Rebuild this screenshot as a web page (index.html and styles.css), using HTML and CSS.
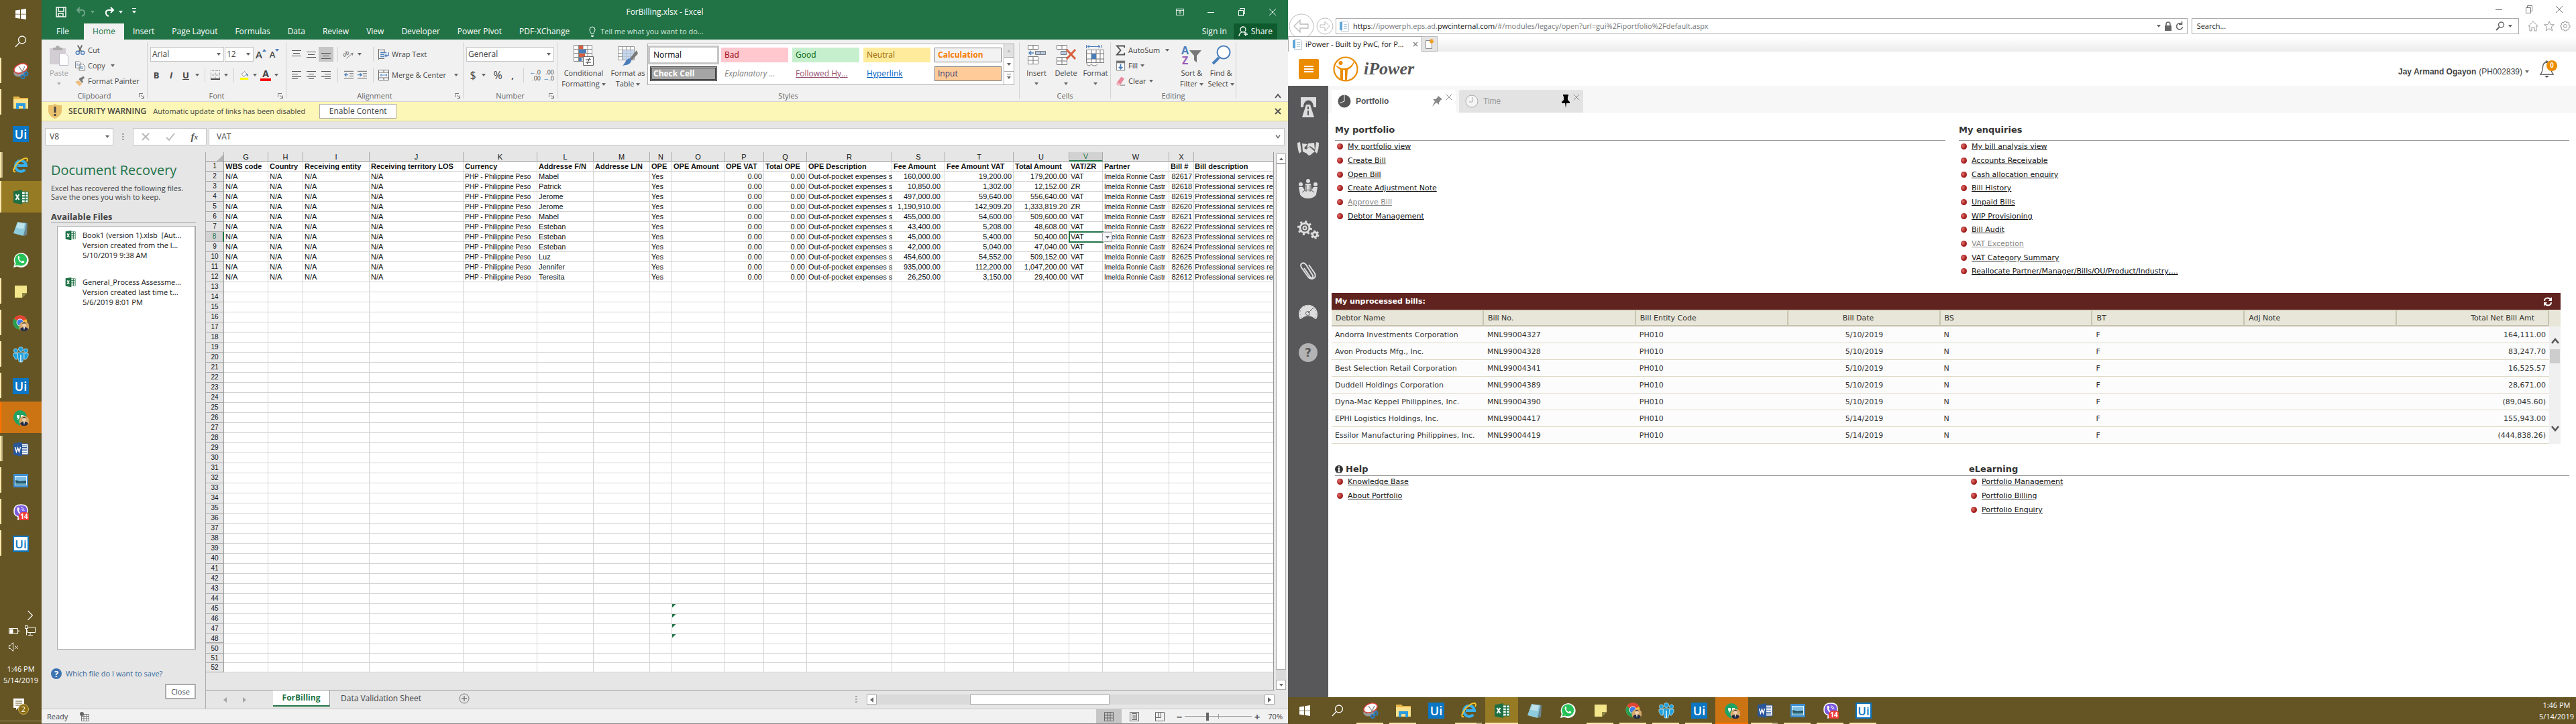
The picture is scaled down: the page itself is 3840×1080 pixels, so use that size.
FILE: index.html
```html
<!DOCTYPE html>
<html lang="en">
<head>
<meta charset="utf-8">
<title>ForBilling.xlsx - Excel</title>
<link rel="stylesheet" href="styles.css">
</head>
<body>
<svg class="defs" aria-hidden="true">
  <symbol id="i-win" viewBox="0 0 24 24"><path fill="#fff" d="M4 6.500l7-1v6.200H4zM12 5.300l8-1.300v7.700h-8zM4 12.600h7v6.200l-7-1zM12 12.600h8V20l-8-1.200z"/></symbol>
  <symbol id="i-search" viewBox="0 0 24 24"><g fill="none" stroke="#fff" stroke-width="1.300"><circle cx="14" cy="9.500" r="5.500"/><path d="M10 13.500L4 20"/></g></symbol>
  <symbol id="i-snip" viewBox="0 0 24 24"><ellipse cx="11" cy="13" rx="10" ry="7" fill="#9a9a9a" transform="rotate(-22 11 13)"/><ellipse cx="12" cy="8" rx="10.500" ry="6.500" fill="#fff" stroke="#d23a35" stroke-width="1.500" transform="rotate(-22 12 8)"/><path d="M9 5l7 10M18 5l-5 10" stroke="#888" stroke-width="1.300"/><g fill="none" stroke="#2c7dc0" stroke-width="2"><circle cx="20" cy="16" r="2.500"/><circle cx="15" cy="20.500" r="2.500"/></g></symbol>
  <symbol id="i-folder" viewBox="0 0 24 24"><path fill="#e9b84a" d="M1 3h8l2 2h12v4H1z"/><path fill="#fce28c" d="M1 7h22v14H1z"/><path fill="#2e9ce0" d="M5 13h14v9h-4v-5H9v5H5z"/></symbol>
  <symbol id="i-ui" viewBox="0 0 24 24"><path fill="#0a76c4" d="M0 0h24v24H0z"/><text x="12" y="18.500" text-anchor="middle" font-family="Open Sans,sans-serif" font-size="18" font-weight="600" fill="#fff">Ui</text></symbol>
  <symbol id="i-uiw" viewBox="0 0 24 24"><path fill="#fff" stroke="#0a76c4" stroke-width="2" d="M1 1h22v22H1z"/><text x="12" y="18.500" text-anchor="middle" font-family="Open Sans,sans-serif" font-size="17" font-weight="600" fill="#0a76c4">Ui</text></symbol>
  <symbol id="i-ie" viewBox="0 0 24 24"><path d="M18 18a8 8 0 1 1 2-6H7" fill="none" stroke="#38b0ee" stroke-width="4"/><path d="M4 21C-2 23 3 11 11 5s13-5 10 1" fill="none" stroke="#f7c52d" stroke-width="2"/></symbol>
  <symbol id="i-excel" viewBox="0 0 24 24"><path fill="#fff" stroke="#217346" d="M12 4h11v16H12z"/><path stroke="#217346" stroke-width="1.500" d="M13 8h9M13 12h9M13 16h9M18.500 4v16" fill="none"/><path fill="#1d7044" d="M1 3.500L14 1v22L1 20.500z"/><path d="M4.500 8l5 8M9.500 8l-5 8" stroke="#fff" stroke-width="2"/></symbol>
  <symbol id="i-word" viewBox="0 0 24 24"><path fill="#fff" stroke="#2b579a" d="M12 4h11v16H12z"/><path stroke="#2b579a" d="M14 7h7M14 9.500h7M14 12h7M14 14.500h7M14 17h7"/><path fill="#2b579a" d="M1 3.500L14 1v22L1 20.500z"/><path d="M3.500 9l2 7 2-6 2 6 2-7" stroke="#fff" stroke-width="1.500" fill="none"/></symbol>
  <symbol id="i-note" viewBox="0 0 24 24"><path fill="#6b8792" d="M16 3l6 1-1 17-4 2z"/><path fill="#8ecbdc" d="M7 2l13 2-4 19-15-4z"/><path fill="#bde3ec" d="M8 3l10 1.500-2 8L5 11z"/></symbol>
  <symbol id="i-wa" viewBox="0 0 24 24"><path fill="#fff" d="M1 23l1.800-6A11 11 0 1 1 7 21.500z"/><path fill="#28c158" d="M3.500 20.500l1.200-4A9 9 0 1 1 8 19.500z"/><path fill="#fff" d="M8 6.500c1-1 2 0 2.300 1.700L9.400 10c1 2 2 3 4 4l1.500-1.300c2 .4 3 1.300 2.300 2.300C15 19 6 13 8 6.500z"/></symbol>
  <symbol id="i-sticky" viewBox="0 0 24 24"><path fill="#f3e68b" d="M3 3h18v11l-7 7H3z"/><path fill="#8f8648" d="M21 14l-7 7v-7z"/></symbol>
  <symbol id="i-chrome" viewBox="0 0 24 24"><circle cx="11" cy="11" r="10.500" fill="#fbc02d"/><path fill="#e04535" d="M11 11L2 5.500A10.500 10.500 0 0 1 20.500 6z"/><path fill="#2a9e52" d="M11 11L2 5.500A10.500 10.500 0 0 0 10 21.500z"/><circle cx="11" cy="11" r="5" fill="#3e7de8" stroke="#fff"/></symbol>
  <symbol id="i-hang" viewBox="0 0 24 24"><path fill="#1fa363" d="M11 1a10 10 0 0 1 0 20v3C4 21 1 16 1 11A10 10 0 0 1 11 1z"/><path fill="#fff" d="M6 8h4v4l-2 3H7l1-3H6zM12 8h4v4l-2 3h-1l1-3h-2z"/></symbol>
  <symbol id="i-face" viewBox="0 0 24 24"><circle cx="17" cy="17" r="7.500" fill="#d6a96a"/><circle cx="17" cy="14.500" r="3" fill="#f0cfae"/><path fill="#332620" d="M14 14c0-4 6-4 6 0l-1-1.500h-4z"/><path fill="#232b45" d="M11 21c1-4 11-4 12 0-3 5-9 5-12 0z"/><path fill="#fff" d="M16 18h2l-1 5z"/></symbol>
  <symbol id="i-people" viewBox="0 0 24 24"><g fill="#1ea0dc" stroke="#c9edfb" stroke-width=".7"><circle cx="4.500" cy="6" r="3"/><circle cx="19.500" cy="6" r="3"/><path d="M1 10h6v9H4l-3-5zM23 10h-6v9h3l3-5z"/><circle cx="12" cy="4" r="3.500"/><path d="M7.500 9h9v7l-2 7h-5l-2-7z"/></g><path stroke="#fff" stroke-width="1.500" d="M12 12v11"/></symbol>
  <symbol id="i-photo" viewBox="0 0 24 24"><path fill="#3f8ed0" d="M1 2h22v20H1z"/><path fill="#e8f4fa" d="M3 5h18v14H3z"/><path fill="#7fbfe6" d="M4 6h16v7H4z"/><path fill="#25505e" d="M4 11l7 2 9-1v6H4z"/><path fill="#4d93a8" d="M4 15h16v3H4z"/></symbol>
  <symbol id="i-viber" viewBox="0 0 24 24"><path fill="#7b5ae0" stroke="#fff" stroke-width="1.500" d="M12 1c8 0 10 3 10 9s-3 9-10 9l-4 4v-4.500C3 17 2 15 2 10s2-9 10-9z"/><path fill="#fff" d="M7 5c2-1 3 1 3 3l-1 1c1 3 2 4 4 5l1.500-1c2 0 3 2 2 3C12 19 5 11 7 5z"/><path fill="none" stroke="#fff" d="M12 5c3 0 5 2 5 5M12.500 7.500c1.500 0 2.500 1 2.500 2.500"/><rect x="9" y="12" width="16" height="14" rx="6" fill="#f13b33"/></symbol>
  <symbol id="i-launch" viewBox="0 0 8 8"><path d="M.5 6V.5H6M3 3l4 4M7.500 3.500v4h-4" fill="none" stroke="#777"/></symbol>
  <symbol id="i-x" viewBox="0 0 12 12"><path d="M1 1l10 10M11 1L1 11" fill="none" stroke="currentColor"/></symbol>
  <symbol id="i-restore" viewBox="0 0 12 12"><path d="M1.500 3.500h7v8h-7zM3.500 3V.5h7v8H9" fill="none" stroke="currentColor"/></symbol>
  <symbol id="i-min" viewBox="0 0 12 12"><path d="M1 6.500h10" stroke="currentColor"/></symbol>
  <symbol id="i-page" viewBox="0 0 16 16"><path fill="#fff" stroke="#b9c7d3" d="M3.500.5h8l3 3v12h-11z"/><path fill="#5fa5d8" d="M1 2h4v12H1z"/><path stroke="#b5cfe2" d="M7 5.500h5M7 8.500h5M7 11.500h5"/></symbol>
</svg>

<div class="desktop">
<section class="monitor">
  <nav class="taskbar taskbar-v" aria-label="Taskbar">
    <button class="tb short" aria-label="Start"><svg><use href="#i-win"/></svg></button>
    <button class="tb short" aria-label="Search"><svg><use href="#i-search"/></svg></button>
    <button class="tb run" aria-label="Snipping Tool"><svg><use href="#i-snip"/></svg></button>
    <button class="tb run" aria-label="File Explorer"><svg><use href="#i-folder"/></svg></button>
    <button class="tb" aria-label="UiPath Studio"><svg><use href="#i-ui"/></svg></button>
    <button class="tb run multi" aria-label="Internet Explorer"><svg><use href="#i-ie"/></svg></button>
    <button class="tb run active" aria-label="Excel"><svg><use href="#i-excel"/></svg></button>
    <button class="tb" aria-label="Notepad"><svg><use href="#i-note"/></svg></button>
    <button class="tb" aria-label="WhatsApp"><svg><use href="#i-wa"/></svg></button>
    <button class="tb run" aria-label="Sticky Notes"><svg><use href="#i-sticky"/></svg></button>
    <button class="tb run" aria-label="Chrome"><svg><use href="#i-chrome"/><use href="#i-face"/></svg></button>
    <button class="tb run" aria-label="People"><svg><use href="#i-people"/></svg></button>
    <button class="tb run" aria-label="UiPath"><svg><use href="#i-ui"/></svg></button>
    <button class="tb run alert" aria-label="Hangouts"><svg><use href="#i-hang"/><use href="#i-face"/></svg></button>
    <button class="tb run multi" aria-label="Word"><svg><use href="#i-word"/></svg></button>
    <button class="tb run" aria-label="Photos"><svg><use href="#i-photo"/></svg></button>
    <button class="tb run" aria-label="Viber"><svg><use href="#i-viber"/><text x="17" y="22" class="count">14</text></svg></button>
    <button class="tb run" aria-label="UiPath Robot"><svg><use href="#i-uiw"/></svg></button>
    <div class="tray">
      <svg class="tray-chev" viewBox="0 0 8 14"><path d="M1 1l6 6-6 6"/></svg>
      <div class="tray-row"><svg viewBox="0 0 16 16"><path d="M.5 4.500h13v8H.5zM15 7v3"/><path d="M2 6h4v5H2z" fill="#fff"/></svg><svg viewBox="0 0 16 16"><path d="M5 2.500h10.500v8H4V7M8 11v3.500M5 14.500h7M.5.5h4v4h-4zM2.500 5v9.500"/></svg></div>
      <div class="tray-row"><svg viewBox="0 0 16 16"><path d="M.5 5.500h2l4-4v13l-4-4h-2zM9 6l5 5M14 6l-5 5"/></svg></div>
      <div class="clock"><span>1:46 PM</span><span>5/14/2019</span></div>
      <button class="notif" aria-label="Notifications"><svg viewBox="0 0 24 24"><path fill="#fff" d="M1 1h16v14H8l-3 3v-3H1z"/><path stroke="#655524" d="M4 5h10M4 8h10M4 11h10"/><circle cx="16" cy="17" r="7.500" fill="#8a6b10" stroke="#cbb36a"/><text x="16" y="21" text-anchor="middle" fill="#fff" font-size="11">2</text></svg></button>
    </div>
  </nav>

  <main class="excel">
    <header class="xl-title">
      <div class="qat">
        <button aria-label="Save"><svg viewBox="0 0 16 16" width="16" height="16"><path d="M1 1h14v14H1zM4 1v6h8V1M4 15v-5h7v5M6.500 13v2" fill="none" stroke="#fff" stroke-width="1.500"/></svg></button>
        <button class="dim undo" aria-label="Undo"><svg viewBox="0 0 16 16" width="16" height="16"><path d="M6 1L2 5l4 4M2 5h7c6 0 5 8 0 9" fill="none" stroke="#fff" stroke-width="2"/></svg><i class="car"></i></button>
        <button aria-label="Redo"><svg viewBox="0 0 16 16" width="16" height="16"><path d="M10 1l4 4-4 4M14 5H7c-6 0-5 8 0 9" fill="none" stroke="#fff" stroke-width="2"/></svg><i class="car"></i></button>
        <button class="more" aria-label="Customize toolbar"><i class="car bar"></i></button>
      </div>
      <h1>ForBilling.xlsx - Excel</h1>
      <div class="winctl">
        <button aria-label="Ribbon options"><svg viewBox="0 0 14 12" width="14" height="12"><path d="M.5.500h13v11H.5zM.5 3h13M7 10V5M4.500 7L7 4.500 9.500 7" fill="none" stroke="#fff"/></svg></button>
        <button aria-label="Minimize"><svg><use href="#i-min"/></svg></button>
        <button aria-label="Restore"><svg><use href="#i-restore"/></svg></button>
        <button aria-label="Close"><svg><use href="#i-x"/></svg></button>
      </div>
    </header>
    <nav class="xl-tabs">
      <button class="file">File</button><button class="on">Home</button><button>Insert</button><button>Page Layout</button><button>Formulas</button><button>Data</button><button>Review</button><button>View</button><button>Developer</button><button>Power Pivot</button><button>PDF-XChange</button>
      <button class="tell"><svg viewBox="0 0 10 16" width="10" height="16"><path d="M3 11C3 9 1 8 1 5a4 4 0 0 1 8 0c0 3-2 4-2 6zM3 13.500h4M3.500 15.500h3" fill="none" stroke="#fff"/></svg>Tell me what you want to do...</button>
      <button class="signin">Sign in</button>
      <button class="share"><svg viewBox="0 0 15 16" width="15" height="16"><circle cx="7" cy="5" r="4" fill="none" stroke="#fff" stroke-width="1.300"/><path d="M1 15c0-3 2-5 4-6M9 9l1 1M11 9v6M8 12h6" fill="none" stroke="#fff" stroke-width="1.300"/></svg>Share</button>
    </nav>

    <div class="ribbon">
      <section class="grp g-clip">
        <div class="tools">
          <button class="big off"><svg viewBox="0 0 30 32" width="30" height="32"><path fill="#cfcbd0" d="M1 5h24v24H1z"/><path fill="#a5a5a5" d="M6 4h4c0-4 6-4 6 0h4v4H6z"/><path fill="#fff" stroke="#bbb2c4" d="M15.500 12.500h9l4 4v14h-13z"/></svg><span>Paste</span><i class="car"></i></button>
          <div class="stack">
            <button><svg viewBox="0 0 16 16"><path d="M4 0l6 10M11 0L6 10" stroke="#666" stroke-width="2"/><g fill="none" stroke="#4a7ebb" stroke-width="1.500"><circle cx="4" cy="12" r="2.700"/><circle cx="12" cy="12" r="2.700"/></g></svg>Cut</button>
            <button><svg viewBox="0 0 16 16"><path fill="#fff" stroke="#777" d="M.5 1.500h6l2 2v8h-8zM6.500 5.500h6l3 3v7h-9z"/><path stroke="#4a7ebb" d="M2 5h3M2 7h3M8 10h5M8 12.500h5"/></svg>Copy<i class="car wide"></i></button>
            <button><svg viewBox="0 0 16 16"><path fill="#eebd80" d="M0 9l6-2 5 5-4 4z"/><path fill="#777" d="M6 5l5 6 2-2-2-3 4-3-2-3-4 3-1-1z"/></svg>Format Painter</button>
          </div>
        </div>
        <footer>Clipboard<svg><use href="#i-launch"/></svg></footer>
      </section>
      <section class="grp g-font">
        <div class="tools rows">
          <div class="row">
            <span class="combo c-face"><select aria-label="Font"><option>Arial</option></select></span><span class="combo c-size"><select aria-label="Font size"><option>12</option></select></span>
            <button class="b20 up">A<svg viewBox="0 0 6 4" width="6" height="4"><path d="M0 4l3-4 3 4z" fill="#4a7ebb"/></svg></button>
            <button class="b20 up small">A<svg viewBox="0 0 6 4" width="6" height="4"><path d="M0 0l3 4 3-4z" fill="#4a7ebb"/></svg></button>
          </div>
          <div class="row">
            <button class="b22"><b>B</b></button><button class="b22"><b class="it">I</b></button><button class="b22"><b class="un">U</b></button><i class="car b12"></i><i class="vs"></i>
            <button class="b20"><svg viewBox="0 0 14 14"><path d="M.5 0v14M13.500 0v14M7 0v14M0 .5h14M0 7h14" fill="none" stroke="#888" stroke-dasharray="1 1"/><path d="M0 13h14" stroke="#444" stroke-width="2"/></svg></button><i class="car b12"></i><i class="vs"></i>
            <button class="b20"><svg viewBox="0 0 16 18" width="16" height="18"><path fill="#fff" stroke="#777" d="M3 7l6-5 4 5-6 5z"/><path fill="#4a7ebb" d="M12 6l3 1v5l-2-2z"/><path fill="#ff0" d="M0 14h16v4H0z"/></svg></button><i class="car b12"></i>
            <button class="b20 fontcol">A</button><i class="car b12"></i>
          </div>
        </div>
        <footer>Font<svg><use href="#i-launch"/></svg></footer>
      </section>
      <section class="grp g-align">
        <div class="tools rows">
          <div class="row">
            <button class="b22"><svg viewBox="0 0 14 14"><path d="M0 1.500h14M2 5.500h10M0 9.500h14" stroke="#555"/></svg></button>
            <button class="b22"><svg viewBox="0 0 14 14"><path d="M0 3.500h14M2 7.500h10M0 11.500h14" stroke="#555"/></svg></button>
            <button class="b22 sel"><svg viewBox="0 0 14 14"><path d="M0 5.500h14M2 9.500h10M0 13.500h14" stroke="#555"/></svg></button><i class="vs"></i>
            <button class="b20"><svg viewBox="0 0 16 16" width="16" height="16"><text x="-2" y="10" font-size="10" font-style="italic" fill="#555" transform="rotate(-30 4 8)">ab</text><path d="M4 15L15 6M15 6l-4 1M15 6l-1 4" stroke="#777" fill="none"/></svg></button><i class="car b12"></i><i class="vs vs2"></i>
            <button class="lab"><svg viewBox="0 0 16 16"><path fill="none" stroke="#666" d="M.5 0v16M1 1.500h8M1 14.500h8M9 .5v5"/><path d="M3 5.500h9M3 8.500h6M3 11.500h6M15 5v5h-5M12 8l-2 2 2 2" fill="none" stroke="#4a7ebb" stroke-width="1.400"/></svg>Wrap Text</button>
          </div>
          <div class="row">
            <button class="b22"><svg viewBox="0 0 14 14"><path d="M0 1.500h14M0 5.500h9M0 9.500h14M0 12.500h9" stroke="#555"/></svg></button>
            <button class="b22"><svg viewBox="0 0 14 14"><path d="M0 1.500h14M3 5.500h8M0 9.500h14M3 12.500h8" stroke="#555"/></svg></button>
            <button class="b22"><svg viewBox="0 0 14 14"><path d="M0 1.500h14M5 5.500h9M0 9.500h14M5 12.500h9" stroke="#555"/></svg></button><i class="vs"></i>
            <button class="b20"><svg viewBox="0 0 16 14"><path d="M0 .5h16M9 4.500h7M9 8.500h7M0 12.500h16" stroke="#555"/><path d="M7 6.500H1M4 4L1 6.500 4 9" fill="none" stroke="#4a7ebb" stroke-width="1.500"/></svg></button>
            <button class="b20"><svg viewBox="0 0 16 14"><path d="M0 .5h16M9 4.500h7M9 8.500h7M0 12.500h16" stroke="#555"/><path d="M0 6.500h6M4 4l3 2.500L4 9" fill="none" stroke="#4a7ebb" stroke-width="1.500"/></svg></button><i class="vs"></i>
            <button class="lab"><svg viewBox="0 0 16 16"><path fill="#fff" stroke="#666" d="M.5.500h15v15H.5zM.5 4h15M.5 12h15M8 1v3M8 12v3"/><path d="M3 8h10M5 6L3 8l2 2M11 6l2 2-2 2" fill="none" stroke="#4a7ebb"/></svg>Merge &amp; Center<i class="car wide"></i></button>
          </div>
        </div>
        <footer>Alignment<svg><use href="#i-launch"/></svg></footer>
      </section>
      <section class="grp g-num">
        <div class="tools rows">
          <div class="row"><span class="combo c-num"><select aria-label="Number format"><option>General</option></select></span></div>
          <div class="row num"><button class="b20">$</button><i class="car b12"></i><button class="b22 pc">%</button><button class="b22"><b>,</b></button><i class="vs"></i>
            <button class="b22 dec"><span><em>←</em>.0</span><span>.00</span></button><button class="b22 dec"><span>.00</span><span><em>→</em>.0</span></button></div>
        </div>
        <footer>Number<svg><use href="#i-launch"/></svg></footer>
      </section>
      <section class="grp g-styles">
        <div class="tools">
          <button class="big w72"><svg viewBox="0 0 30 32" width="30" height="32"><path fill="#fff" stroke="#888" d="M.5.500h27v24H.5zM.5 6.500h27M.5 12.500h27M.5 18.500h27M7.500.500v24M14 .5v24M21 .5v24"/><path fill="#d65f3f" d="M8 1h6v5H8zM8 13h9v5H8z"/><path fill="#4a7ebb" d="M8 7h11v5H8zM8 19h4v5H8z"/><path fill="#fff" stroke="#666" d="M14.500 17.500h15v13h-15z"/><path d="M18 22h8M18 26h8M24 19l-4 10" stroke="#333"/></svg><span>Conditional</span><span>Formatting <i class="car"></i></span></button>
          <button class="big w60"><svg viewBox="0 0 30 32" width="30" height="32"><path fill="#fff" stroke="#999" d="M.5 2.500h24v20H.5zM.5 7.500h24M.5 12.500h24M.5 17.500h24M6.500 2.500v20M12.500 2.500v20M18.500 2.500v20"/><path fill="#b8cce6" d="M7 8h17v14H7z" opacity=".8"/><path fill="#777" d="M28 8l2 5-9 10-3-3z"/><path fill="#4a7ebb" d="M17 20c3 0 4 3 2 6-2 4-8 4-12 5 4-3 4-9 10-11z"/></svg><span>Format as</span><span>Table <i class="car"></i></span></button>
          <div class="gallery">
            <div class="cells">
              <button class="s-normal">Normal</button><button class="s-bad">Bad</button><button class="s-good">Good</button><button class="s-neutral">Neutral</button><button class="s-calc">Calculation</button>
              <button class="s-check">Check Cell</button><button class="s-expl">Explanatory ...</button><button class="s-foll">Followed Hy...</button><button class="s-hyper">Hyperlink</button><button class="s-input">Input</button>
            </div>
            <div class="spin"><button class="d" aria-label="Up"><i class="car flip"></i></button><button aria-label="Down"><i class="car"></i></button><button aria-label="More"><i class="car bar"></i></button></div>
          </div>
        </div>
        <footer>Styles</footer>
      </section>
      <section class="grp g-cells">
        <div class="tools">
          <button class="big w44"><svg viewBox="0 0 30 32" width="30" height="32"><path fill="#fff" stroke="#777" d="M2.500.500h15v6h-15zM10 .5v6M2.500 17.500h15v11h-15zM10 17.500v11M2.500 23h15"/><path fill="#b8cce6" stroke="#777" d="M13.500 9.500h15v5h-15zM21 9.500v5"/><path d="M11 12H4M7 9l-3 3 3 3" stroke="#4a7ebb" stroke-width="1.500" fill="none"/></svg><span>Insert</span><i class="car"></i></button>
          <button class="big w44"><svg viewBox="0 0 30 32" width="30" height="32"><path fill="#fff" stroke="#777" d="M1.500.500h15v6h-15zM9 .5v6M1.500 18.500h15v11h-15zM9 18.500v11M1.500 24h15"/><path fill="#b8cce6" stroke="#777" d="M7.500 9.500h8v5h-8z"/><path d="M16 7l13 14M29 7L16 21" stroke="#d65f3f" stroke-width="3"/></svg><span>Delete</span><i class="car"></i></button>
          <button class="big w44"><svg viewBox="0 0 30 32" width="30" height="32"><path d="M1.500 0v5M23.500 0v5M3 2.500h19M6 0L3 2.500 6 5M19 0l3 2.500L19 5" stroke="#4a7ebb" fill="none"/><path fill="#fff" stroke="#777" d="M1.500 7.500h26v19h-26zM1.500 13h26M1.500 21h26M9 7.500v19M16 7.500v19M22 7.500v19M2 27c0 5 6 5 7 1 1 4 8 4 9 0"/><path fill="#4a7ebb" d="M9 13h7v8H9z"/></svg><span>Format</span><i class="car"></i></button>
        </div>
        <footer>Cells</footer>
      </section>
      <section class="grp g-edit">
        <div class="tools">
          <div class="stack">
            <button><svg viewBox="0 0 16 16"><path d="M14 4V1H2l6 7-6 7h12v-3" fill="none" stroke="#555" stroke-width="2"/></svg>AutoSum<i class="car wide"></i></button>
            <button><svg viewBox="0 0 16 16"><path fill="#fff" stroke="#777" d="M1.500 1.500h13v14h-13z"/><path fill="#777" d="M1 0h14v4H1z"/><path d="M8 5v8M5 10l3 3 3-3" stroke="#4a7ebb" stroke-width="2" fill="none"/></svg>Fill<i class="car"></i></button>
            <button><svg viewBox="0 0 16 16"><path fill="#e8889a" d="M9 1l5 3-6 9-6-3z"/><path fill="#f4b8c2" d="M2 10l6 3-2 2H3l-2-2z"/><path d="M7 14.500h8" stroke="#666"/></svg>Clear<i class="car"></i></button>
          </div>
          <button class="big w44"><svg viewBox="0 0 30 32" width="30" height="32"><text x="0" y="14" font-size="16" font-weight="bold" fill="#4a7ebb">A</text><text x="1" y="29" font-size="16" font-weight="bold" fill="#9a5bb5">Z</text><path fill="#777" d="M12 8h18l-7 8v10l-4-3v-7z"/></svg><span>Sort &amp;</span><span>Filter <i class="car"></i></span></button>
          <button class="big w44"><svg viewBox="0 0 30 32" width="30" height="32"><circle cx="19" cy="11" r="9.500" fill="#fff" stroke="#4a7ebb" stroke-width="2"/><path d="M12 19L3 28" stroke="#4a7ebb" stroke-width="4"/></svg><span>Find &amp;</span><span>Select <i class="car"></i></span></button>
        </div>
        <footer>Editing</footer>
      </section>
      <button class="collapse" aria-label="Collapse ribbon"><svg viewBox="0 0 10 8" width="10" height="8"><path d="M1 7l4-5 4 5" fill="none" stroke="#555" stroke-width="2"/></svg></button>
    </div>

    <div class="security">
      <svg viewBox="0 0 20 22" width="20" height="22"><path fill="#eac26e" d="M10 0c3 2 6 2 10 2v8c0 6-5 10-10 12C5 20 0 16 0 10V2c4 0 7 0 10-2z"/><path d="M10 4v9M10 15v3" stroke="#444" stroke-width="3"/></svg>
      <strong>SECURITY WARNING</strong><span>Automatic update of links has been disabled</span>
      <button class="enable">Enable Content</button>
      <button class="dismiss" aria-label="Dismiss"><svg viewBox="0 0 10 10" width="10" height="10"><path d="M1 1l8 8M9 1L1 9" stroke="#555" stroke-width="2"/></svg></button>
    </div>

    <div class="fbar">
      <div class="namebox"><input aria-label="Name box" value="V8"><i class="car"></i></div>
      <span class="dots"></span>
      <div class="fbtns"><button aria-label="Cancel"><svg viewBox="0 0 12 12" width="12" height="12"><path d="M1 1l10 10M11 1L1 11" stroke="#bbb" stroke-width="2"/></svg></button><button aria-label="Enter"><svg viewBox="0 0 14 12" width="14" height="12"><path d="M1 7l4 4 8-10" stroke="#bbb" stroke-width="2" fill="none"/></svg></button><button class="fx">f<sub>x</sub></button></div>
      <div class="formula"><input aria-label="Formula" value="VAT"><svg viewBox="0 0 10 8" width="8" height="6"><path d="M1 1l4 5 4-5" fill="none" stroke="#666" stroke-width="2"/></svg></div>
    </div>

    <div class="work">
      <aside class="recovery">
        <h2>Document Recovery</h2>
        <p>Excel has recovered the following files.<br>Save the ones you wish to keep.</p>
        <h3>Available Files</h3>
        <ul>
          <li><svg><use href="#i-excel"/></svg><div>Book1 (version 1).xlsb&nbsp; [Aut...<br>Version created from the l...<br>5/10/2019 9:38 AM</div></li>
          <li><svg><use href="#i-excel"/></svg><div>General_Process Assessme...<br>Version created last time t...<br>5/6/2019 8:01 PM</div></li>
        </ul>
        <a href="#" class="which"><svg viewBox="0 0 16 16" width="16" height="16"><circle cx="8" cy="8" r="8" fill="#3d72b0"/><text x="8" y="12.500" text-anchor="middle" font-size="13" font-weight="bold" fill="#fff">?</text></svg>Which file do I want to save?</a>
        <button class="close">Close</button>
      </aside>
      <div class="book">
        <div class="view">
          <div class="sheet">
            <table class="cells-table"><colgroup><col class="c-rh"><col class="c-g"><col class="c-h"><col class="c-i"><col class="c-j"><col class="c-k"><col class="c-l"><col class="c-m"><col class="c-n"><col class="c-o"><col class="c-p"><col class="c-q"><col class="c-r"><col class="c-s"><col class="c-t"><col class="c-u"><col class="c-v"><col class="c-w"><col class="c-x"><col></colgroup>
              <thead><tr><th class="corner"></th><th>G</th><th>H</th><th>I</th><th>J</th><th>K</th><th>L</th><th>M</th><th>N</th><th>O</th><th>P</th><th>Q</th><th>R</th><th>S</th><th>T</th><th>U</th><th class="cur">V</th><th>W</th><th>X</th><th class="last"></th></tr></thead>
              <tbody id="rows"></tbody>
            </table>
          </div>
          <div class="vscroll"><span class="sb"><i class="car flip"></i></span><span class="thumb"></span><span class="gap"></span><span class="sb"><i class="car"></i></span></div>
        </div>
        <div class="sheets">
          <span class="nav"><i class="tri l"></i><i class="tri r"></i></span>
          <button class="on">ForBilling</button><button>Data Validation Sheet</button>
          <button class="add" aria-label="New sheet"><svg viewBox="0 0 16 16" width="16" height="16"><circle cx="8" cy="8" r="7" fill="none" stroke="#777"/><path d="M8 4v8M4 8h8" stroke="#777" stroke-width="1.500"/></svg></button>
          <span class="dots"></span>
          <div class="hscroll"><span class="sb"><i class="tri l"></i></span><span class="g1"></span><span class="thumb"></span><span class="g2"></span><span class="sb"><i class="tri r"></i></span></div>
        </div>
      </div>
    </div>
    <footer class="status">
      <span>Ready</span>
      <svg viewBox="0 0 14 14" width="14" height="14"><path fill="#fff" stroke="#777" d="M2.500 3.500h11v10h-11zM2.500 6.500h11M2.500 10h11M6 4v9M10 4v9"/><circle cx="3" cy="3" r="3" fill="#666"/></svg>
      <div class="views">
        <button class="sel" aria-label="Normal view"><svg viewBox="0 0 14 14" width="14" height="14"><path d="M.5.500h13v13H.5zM.5 5h13M.5 9h13M5 .5v13M9 .5v13" fill="none" stroke="#666"/></svg></button>
        <button aria-label="Page layout view"><svg viewBox="0 0 14 14" width="14" height="14"><path d="M.5.500h13v13H.5zM3.500 2.500h7v9h-7zM5 5h4M5 7h4M5 9h4" fill="none" stroke="#666"/></svg></button>
        <button aria-label="Page break view"><svg viewBox="0 0 14 14" width="14" height="14"><path d="M.5.500h13v13H.5zM.5 8.500h8V.5M4.500.500v8" fill="none" stroke="#666"/></svg></button>
      </div>
      <button class="zm" aria-label="Zoom out">−</button><input class="zoom" type="range" min="10" max="190" value="70" aria-label="Zoom"><button class="zm" aria-label="Zoom in">+</button>
      <span class="pct">70%</span>
    </footer>
  </main>
</section>

<section class="monitor browser">
  <header class="ie">
    <div class="ie-ctl">
      <button aria-label="Minimize"><svg><use href="#i-min"/></svg></button><button aria-label="Restore"><svg><use href="#i-restore"/></svg></button><button aria-label="Close"><svg><use href="#i-x"/></svg></button>
    </div>
    <div class="ie-nav">
      <button class="back" aria-label="Back"><svg viewBox="0 0 38 38" width="38" height="38"><circle cx="19" cy="19" r="18" fill="#fff" stroke="#bbb"/><path d="M8 19l9-9v6h12v6H17v6z" fill="#fff" stroke="#bbb" stroke-width="1.300"/></svg></button>
      <button class="fwd" aria-label="Forward"><svg viewBox="0 0 26 26" width="26" height="26"><circle cx="13" cy="13" r="12" fill="#fff" stroke="#bbb"/><path d="M20 13l-7-7v5H6v4h7v5z" fill="#fff" stroke="#bbb"/></svg></button>
      <div class="url"><svg class="pg"><use href="#i-page"/></svg><div role="textbox" aria-label="Address"><b>https</b>://ipowerph.eps.ad.<b>pwcinternal.com</b>/#/modules/legacy/open?url=gui%2Fiportfolio%2Fdefault.aspx</div>
        <i class="car"></i><svg viewBox="0 0 12 14" width="12" height="14"><path fill="#666" d="M1 6h10v8H1z"/><path d="M3 6V4c0-4 6-4 6 0v2" fill="none" stroke="#666" stroke-width="1.500"/></svg><svg viewBox="0 0 12 14" width="12" height="14"><path d="M9 4a4.500 4.500 0 1 0 1.500 4M9.500 0v4.500H5" fill="none" stroke="#666" stroke-width="1.600"/></svg></div>
      <div class="find"><input aria-label="Search" value="Search..."><svg viewBox="0 0 14 14" width="14" height="14"><circle cx="8.500" cy="5" r="4" fill="none" stroke="#666" stroke-width="1.500"/><path d="M6 8l-5 5" stroke="#666" stroke-width="2"/></svg><i class="car"></i></div>
      <div class="ie-ico">
        <svg viewBox="0 0 16 16"><path d="M1 8l7-7 7 7h-2v7h-3v-5H6v5H3V8z"/></svg>
        <svg viewBox="0 0 16 16"><path d="M8 .8l2.200 5h5.200l-4.200 3.400 1.600 5.800L8 11.700 3.200 15l1.600-5.800L.6 5.800h5.200z"/></svg>
        <svg viewBox="0 0 16 16"><circle cx="8" cy="8" r="2.500"/><path d="M6.500 1h3l.5 2 2-1 2 2-1 2 2 .5v3l-2 .5 1 2-2 2-2-1-.5 2h-3L6 13l-2 1-2-2 1-2-2-.5v-3L3 6 2 4l2-2 2 1z"/></svg>
      </div>
    </div>
    <div class="ie-tabs">
      <div class="ie-tab"><svg class="pg"><use href="#i-page"/></svg><span>iPower - Built by PwC, for P...</span><svg class="tx" viewBox="0 0 8 8" width="8" height="8"><path d="M1 1l6 6M7 1L1 7" stroke="#888" stroke-width="1.500"/></svg></div>
      <button class="newtab" aria-label="New tab"><svg viewBox="0 0 14 16" width="14" height="16"><path fill="#fff" stroke="#888" d="M1.500 2.500h9v12h-9z"/><path stroke="#f0a020" stroke-width="1.500" d="M10 0v7M6.500 3.500h7M8 1l4 5M12 1L8 6"/></svg></button>
    </div>
  </header>

  <div class="app-head">
    <button class="burger" aria-label="Menu"><i></i><i></i><i></i></button>
    <svg class="logo" viewBox="0 0 38 38" width="38" height="38"><circle cx="19" cy="19" r="17.500" fill="none" stroke="#eb8c00" stroke-width="2.200"/><circle cx="11.500" cy="10" r="3" fill="#eb8c00"/><path fill="#eb8c00" d="M4 13c4 3 9 5 12 5 8 0 12-4 16-12-1 9-6 12-10 14l-1 15c-1 1-2 1-3 1V21l-3-1v15l-4-1V20C8 18 5 16 4 13z"/></svg>
    <span class="brand">iPower</span>
    <button class="user"><b>Jay Armand Ogayon</b> (PH002839)<i class="car"></i></button>
    <button class="bell" aria-label="Notifications"><svg viewBox="0 0 24 26" width="24" height="26"><path d="M3 21h19c-4-5-3-9-4-14-1-5-10-5-11 0-1 5 0 9-4 14z" fill="none" stroke="#555" stroke-width="1.300"/><path fill="#555" d="M9 23h7l-3.500 3zM10 2h5l-2.500-2z"/></svg><span class="badge">0</span></button>
  </div>

  <div class="app">
    <nav class="side">
      <a href="#" aria-label="Road"><svg viewBox="0 0 32 32"><path fill="#ddd" d="M5 1h23v15h-4c0-14-15-14-15 0H5z"/><path fill="#ddd" d="M13 12h6l6 19H7z"/><path stroke="#58585a" stroke-width="2" d="M16 15v4M16 21v7"/></svg></a>
      <a href="#" aria-label="Deals"><svg viewBox="0 0 32 32"><path fill="#ddd" d="M0 8l4-1 2 14-3 3C1 20 0 14 0 8zM32 8l-4-1-2 14 3 3c2-4 3-10 3-16zM7 9l8 1-5 6 3 2 5-4 8 7-4 3-2 2-3 1-3-3-6-3zM16 9l9-1 1 10-7-5-5 3z"/></svg></a>
      <a href="#" aria-label="Teams"><svg viewBox="0 0 32 32"><g fill="#ddd"><circle cx="16" cy="4" r="3"/><circle cx="5" cy="9" r="3"/><circle cx="27" cy="9" r="3"/><path d="M2 13h6l3 5 1-10h8l1 10 3-5h6l-2 11c-4 8-20 8-24 0z"/></g><path d="M7 21c5-5 13-5 18 0M13 10v10M19 10v10" fill="none" stroke="#58585a"/></svg></a>
      <a href="#" aria-label="Settings"><svg viewBox="0 0 32 32"><g fill="none" stroke="#ddd"><circle cx="11" cy="13" r="7" stroke-width="3"/><circle cx="11" cy="13" r="9.500" stroke-width="3" stroke-dasharray="3 4.460"/><circle cx="11" cy="13" r="2.500" stroke-width="2"/><circle cx="26" cy="23" r="3.500" stroke-width="3"/><circle cx="26" cy="23" r="5.500" stroke-width="2" stroke-dasharray="3 2.760"/></g></svg></a>
      <a href="#" aria-label="Attachments"><svg viewBox="0 0 32 32"><path fill="none" stroke="#ddd" stroke-width="2" d="M10 12l9 13c2 3 5 1 4-2L13 7C9 2 3 5 6 11l10 14c5 6 13 2 10-5L17 7"/></svg></a>
      <a href="#" aria-label="Dashboard"><svg viewBox="0 0 32 32"><path fill="#ddd" d="M4 27a14 14 0 1 1 24 0l-3-1c-4-5-14-5-18 0z"/><path d="M16 18l8-8" stroke="#58585a"/><circle cx="15.500" cy="18.500" r="3" fill="none" stroke="#58585a"/><path d="M6 25a12 12 0 1 1 20 0" fill="none" stroke="#58585a" stroke-dasharray="1 4"/></svg></a>
      <a href="#" aria-label="Help"><svg viewBox="0 0 32 32"><circle cx="16" cy="16" r="14" fill="#b3b3b3"/><text x="16" y="22" text-anchor="middle" font-size="17" font-weight="bold" fill="#58585a">?</text></svg></a>
    </nav>
    <div class="content">
      <div class="tabs">
        <div class="tab on"><svg viewBox="0 0 20 20" width="20" height="20"><circle cx="10" cy="10" r="9.500" fill="#555"/><path d="M10 1v9l-7 3" stroke="#fff" fill="none"/></svg><span>Portfolio</span><svg class="pin" viewBox="0 0 16 16" width="16" height="16"><path fill="#888" d="M10 0l6 5-2 1-3 4v3L7 10l-6 6 4-8-3-3h4l3-3z"/></svg><svg class="cx"><use href="#i-x"/></svg></div>
        <div class="tab"><svg viewBox="0 0 20 20" width="20" height="20"><circle cx="10" cy="10" r="9" fill="#f4f4f4" stroke="#aaa"/><path d="M11 4v7H6" stroke="#aaa" fill="none"/></svg><span>Time</span><svg class="pin" viewBox="0 0 12 20" width="12" height="20"><path fill="#000" d="M2 0h8v2L9 3v5l3 3v2H7l-1 7-1-7H0v-2l3-3V3L2 2z"/></svg><svg class="cx"><use href="#i-x"/></svg></div>
      </div>
      <div class="two">
        <section><h2>My portfolio</h2>
          <ul class="links"><li><a href="#">My portfolio view</a></li><li><a href="#">Create Bill</a></li><li><a href="#">Open Bill</a></li><li><a href="#">Create Adjustment Note</a></li><li><a href="#" class="dis">Approve Bill</a></li><li><a href="#">Debtor Management</a></li></ul>
        </section>
        <section><h2>My enquiries</h2>
          <ul class="links"><li><a href="#">My bill analysis view</a></li><li><a href="#">Accounts Receivable</a></li><li><a href="#">Cash allocation enquiry</a></li><li><a href="#">Bill History</a></li><li><a href="#">Unpaid Bills</a></li><li><a href="#">WIP Provisioning</a></li><li><a href="#">Bill Audit</a></li><li><a href="#" class="dis">VAT Exception</a></li><li><a href="#">VAT Category Summary</a></li><li><a href="#">Reallocate Partner/Manager/Bills/OU/Product/Industry,...</a></li></ul>
        </section>
      </div>
      <section class="bills">
        <h2>My unprocessed bills:<svg viewBox="0 0 14 14" width="14" height="14"><path d="M2 6c0-5 7-6 9-2M12 8c0 5-7 6-9 2" fill="none" stroke="#fff" stroke-width="2"/><path fill="#fff" d="M13 0v6H8zM1 14V8h5z"/></svg></h2>
        <div class="bwrap">
          <table>
            <thead><tr><th>Debtor Name</th><th>Bill No.</th><th>Bill Entity Code</th><th class="mid">Bill Date</th><th>BS</th><th>BT</th><th>Adj Note</th><th class="amt">Total Net Bill Amt</th></tr></thead>
            <tbody>
              <tr><td>Andorra Investments Corporation</td><td>MNL99004327</td><td>PH010</td><td class="mid">5/10/2019</td><td>N</td><td>F</td><td></td><td class="amt">164,111.00</td></tr>
              <tr><td>Avon Products Mfg., Inc.</td><td>MNL99004328</td><td>PH010</td><td class="mid">5/10/2019</td><td>N</td><td>F</td><td></td><td class="amt">83,247.70</td></tr>
              <tr><td>Best Selection Retail Corporation</td><td>MNL99004341</td><td>PH010</td><td class="mid">5/10/2019</td><td>N</td><td>F</td><td></td><td class="amt">16,525.57</td></tr>
              <tr><td>Duddell Holdings Corporation</td><td>MNL99004389</td><td>PH010</td><td class="mid">5/10/2019</td><td>N</td><td>F</td><td></td><td class="amt">28,671.00</td></tr>
              <tr><td>Dyna-Mac Keppel Philippines, Inc.</td><td>MNL99004390</td><td>PH010</td><td class="mid">5/10/2019</td><td>N</td><td>F</td><td></td><td class="amt">(89,045.60)</td></tr>
              <tr><td>EPHI Logistics Holdings, Inc.</td><td>MNL99004417</td><td>PH010</td><td class="mid">5/14/2019</td><td>N</td><td>F</td><td></td><td class="amt">155,943.00</td></tr>
              <tr><td>Essilor Manufacturing Philippines, Inc.</td><td>MNL99004419</td><td>PH010</td><td class="mid">5/14/2019</td><td>N</td><td>F</td><td></td><td class="amt">(444,838.26)</td></tr>
            </tbody>
          </table>
          <div class="bscroll"><svg viewBox="0 0 12 10" width="12" height="10"><path d="M1 9l5-6 5 6" fill="none" stroke="#555" stroke-width="2.500"/></svg><span></span><svg class="dn" viewBox="0 0 12 10" width="12" height="10"><path d="M1 1l5 6 5-6" fill="none" stroke="#555" stroke-width="2.500"/></svg></div>
        </div>
      </section>
      <div class="two help">
        <section><h2><svg viewBox="0 0 12 12" width="12" height="12"><circle cx="6" cy="6" r="6" fill="#333"/><path d="M6 1.500v2M4.500 5H6v4M4.500 9.500h3" stroke="#fff" stroke-width="1.800" fill="none"/></svg>Help</h2>
          <ul class="links"><li><a href="#">Knowledge Base</a></li><li><a href="#">About Portfolio</a></li></ul></section>
        <section><h2>eLearning</h2>
          <ul class="links"><li><a href="#">Portfolio Management</a></li><li><a href="#">Portfolio Billing</a></li><li><a href="#">Portfolio Enquiry</a></li></ul></section>
      </div>
    </div>
  </div>

  <nav class="taskbar taskbar-h" aria-label="Taskbar">
    <button class="tb" aria-label="Start"><svg><use href="#i-win"/></svg></button>
    <button class="tb" aria-label="Search"><svg><use href="#i-search"/></svg></button>
    <button class="tb run" aria-label="Snipping Tool"><svg><use href="#i-snip"/></svg></button>
    <button class="tb run" aria-label="File Explorer"><svg><use href="#i-folder"/></svg></button>
    <button class="tb" aria-label="UiPath Studio"><svg><use href="#i-ui"/></svg></button>
    <button class="tb run multi" aria-label="Internet Explorer"><svg><use href="#i-ie"/></svg></button>
    <button class="tb run active" aria-label="Excel"><svg><use href="#i-excel"/></svg></button>
    <button class="tb" aria-label="Notepad"><svg><use href="#i-note"/></svg></button>
    <button class="tb" aria-label="WhatsApp"><svg><use href="#i-wa"/></svg></button>
    <button class="tb run" aria-label="Sticky Notes"><svg><use href="#i-sticky"/></svg></button>
    <button class="tb run" aria-label="Chrome"><svg><use href="#i-chrome"/><use href="#i-face"/></svg></button>
    <button class="tb run" aria-label="People"><svg><use href="#i-people"/></svg></button>
    <button class="tb run" aria-label="UiPath"><svg><use href="#i-ui"/></svg></button>
    <button class="tb run alert" aria-label="Hangouts"><svg><use href="#i-hang"/><use href="#i-face"/></svg></button>
    <button class="tb run multi" aria-label="Word"><svg><use href="#i-word"/></svg></button>
    <button class="tb run" aria-label="Photos"><svg><use href="#i-photo"/></svg></button>
    <button class="tb run" aria-label="Viber"><svg><use href="#i-viber"/><text x="17" y="22" class="count">14</text></svg></button>
    <button class="tb run" aria-label="UiPath Robot"><svg><use href="#i-uiw"/></svg></button>
    <div class="clock"><span>1:46 PM</span><span>5/14/2019</span></div>
  </nav>
</section>
</div>
<script src="sheet.js"></script>
</body>
</html>
```
FILE: styles.css
```css
*{box-sizing:border-box}
body{margin:0;font:11px/16px "Open Sans","Noto Sans",sans-serif;color:#444;background:#fff}
button{font:inherit;color:inherit;background:none;border:0;padding:0;margin:0;display:flex;align-items:center;justify-content:center;white-space:nowrap}
input,select{font:inherit;color:inherit;border:0;background:none;padding:0;margin:0;outline:0;min-width:0}
h1,h2,h3,p,ul{margin:0;padding:0;font-weight:400}
ul{list-style:none}
svg{flex:none;overflow:visible}
.defs{position:absolute;width:0;height:0}
.desktop{display:flex;min-height:100vh}
.monitor{flex:1 1 0;min-width:0;display:flex}
.car{display:inline-block;flex:none;width:0;height:0;border:3px solid transparent;border-top:4px solid #666;border-bottom:0;vertical-align:middle}
.car.flip{border-top:0;border-bottom:4px solid #bbb}
.car.bar{position:relative}
.car.bar::before{content:"";position:absolute;left:-3px;top:-8px;width:6px;height:1px;background:#666}
.car.wide{margin-left:8px}
.car.b12{margin:0 3px}

/* taskbars */
.taskbar{background:#655524;color:#fff;display:flex;flex:none}
.taskbar-v{flex-direction:column;width:62px}
.tb{flex:none;position:relative}
.tb svg{width:24px;height:24px}
.count{font:bold 10px "Open Sans",sans-serif;fill:#fff;text-anchor:middle}
.taskbar-v .tb{width:62px;height:47px}
.taskbar-v .tb.short{height:41px}
.tb.run::before{content:"";position:absolute;background:#ffe9ae}
.taskbar-v .run::before{left:0;top:4px;width:2px;height:38px}
.taskbar-v .multi::before{width:4px;background:linear-gradient(90deg,#ffe9ae 50%,#b9ab7e 50%)}
.taskbar .active{background:#977a24}
.taskbar .alert{background:#cc7414}
.taskbar-v .active::before,.taskbar-v .alert::before{top:0;height:47px}
.taskbar .alert::before{background:#ff7200}
.taskbar-h{height:40px}
.taskbar-h .tb{width:49px;height:40px}
.taskbar-h .run::before{bottom:0;left:4px;width:40px;height:2px}
.taskbar-h .multi::before{background:linear-gradient(90deg,#ffe9ae 80%,#b9ab7e 80%)}
.taskbar-h .active::before,.taskbar-h .alert::before{left:0;width:49px}
.clock{display:flex;flex-direction:column;align-items:center;line-height:17px}
.taskbar-h .clock{margin-left:auto;padding:3px 3px 0 0}
.tray{margin-top:auto;display:flex;flex-direction:column;align-items:center;border-bottom:1px solid #a3966a;margin-bottom:4px;padding-bottom:10px}
.tray svg{width:16px;height:16px;fill:none;stroke:#fff}
.tray-chev{margin:0 0 3px 28px;height:14px}
.tray-row{display:flex;gap:8px;height:24px;width:36px;align-items:center}
.tray .clock{margin-top:12px;width:62px}
.notif{margin-top:18px}
.tray .notif svg{width:24px;height:24px;stroke:none}

/* excel frame */
.excel{flex:1;min-width:0;display:flex;flex-direction:column;background:#e6e6e6;border-bottom:1px solid #888}
.xl-title{height:35px;background:#217346;color:#fff;display:grid;grid-template-columns:1fr auto 1fr;align-items:center}
.xl-title h1{font-size:12px;line-height:16px}
.qat{display:flex;gap:14px;padding-left:21px}
.qat button{gap:6px}
.qat .dim{opacity:.35}
.qat .car{border-top-color:#fff}
.qat .car.bar::before{background:#fff}
.winctl{display:flex;justify-content:flex-end;gap:34px;padding-right:17px}
.winctl svg{width:12px;height:12px}
.xl-tabs{height:24px;background:#217346;color:#fff;display:flex;font-size:12px;padding-right:16px}
.xl-tabs button{padding:0 13px}
.xl-tabs .file{width:63px}
.xl-tabs .on{background:#f1f1f1;color:#217346;width:60px;padding:0}
.xl-tabs .tell{gap:7px;color:#d3e6db;font-size:11px;padding-left:16px}
.xl-tabs .signin{margin-left:auto;padding:0 10px}
.xl-tabs .share{background:#0e5a2e;gap:4px;padding:0 7px}

/* ribbon */
.ribbon{display:flex;background:#f1f1f1;padding:4px 0 4px;height:93px;border-bottom:1px solid #d5d5d5}
.grp{flex:none;display:flex;flex-direction:column;border-right:1px solid #d2d2d2;height:84px}
.tools{display:flex;align-items:flex-start}
.grp footer{height:16px;display:flex;justify-content:center;align-items:center;color:#666;position:relative}
.grp footer svg{position:absolute;right:4px;top:4px;width:8px;height:8px}
.grp>.tools{height:68px;flex:none;margin-bottom:4px}
.g-clip{width:158px}.g-font{width:207px}.g-align{width:264px}.g-num{width:140px}.g-styles{width:689px}.g-cells{width:136px}.g-edit{width:187px}
.big{flex-direction:column;justify-content:flex-start;padding-top:4px;line-height:16px}
.big svg{margin-bottom:2px}
.big>.car{margin-top:6px}
.big.off{opacity:.9;color:#999;width:38px;margin-left:7px}
.big.off .car{border-top-color:#aaa}
.w72{width:72px}.w60{width:60px}.w44{width:44px}
.stack{display:flex;flex-direction:column}
.stack button{height:23px;justify-content:flex-start;gap:4px}
.stack svg{width:15px;height:16px}
.stack .car.wide{margin-left:4px}
.g-clip .stack{margin-left:5px}
.rows{flex-direction:column;gap:9px;padding-top:7px}
.row{display:flex;height:22px;align-items:center}
.row svg{width:14px;height:14px}
.g-font .row,.g-align .row,.g-num .row{padding-left:4px}
.g-font .row+.row{padding-left:2px}
.combo{height:22px;background:#fff;border:1px solid #c6c6c6;display:flex;align-items:center;position:relative;margin-right:1px}
.combo::after{content:"";position:absolute;right:4px;top:8px;border:3px solid transparent;border-top:4px solid #666;border-bottom:0}
.combo select{appearance:none;width:100%;padding-left:2px;font-size:12px;height:20px}
.c-face{width:110px}.c-size{width:43px}.c-num{width:131px}
.b20{width:20px;height:22px}
.b22{width:22px;height:22px}
.b22 b{font-size:13px}
.it{font-style:italic}
.un{text-decoration:underline}
.up{font-size:15px;font-weight:600;align-items:flex-start;padding-top:3px}
.up.small{font-size:13px}
.row .up svg{width:6px;height:4px}
.fontcol{font-size:14px;font-weight:700;border-bottom:4px solid red;height:18px;width:16px;margin:0 2px;line-height:14px}
.sel{background:#c6c6c6}
.vs{width:1px;height:22px;background:#d2d2d2;margin:0 5px}
.g-align .vs{margin:0 6px}
.g-align .vs2{margin-left:14px}
.lab{gap:4px;margin-left:1px}
.row .lab svg{width:16px;height:16px}
.num{font-size:16px}
.num .pc{margin-left:4px}
.dec{flex-direction:column;font-size:9px;line-height:9px;align-items:flex-end;width:20px}
.dec em{font-style:normal;color:#2f6cb5}
.g-styles .big{margin-left:3px}
.w60.big{margin-left:0}
.gallery{display:flex;width:547px;height:62px;background:#fff;border:1px solid #ababab;margin:2px 0 0 -1px}
.cells{flex:1;display:grid;grid-template-columns:repeat(5,100px);grid-auto-rows:22px;gap:6px;padding:5px 3px}
.cells button{justify-content:flex-start;padding-left:4px;font-size:12px;border:1px solid transparent}
.cells .s-normal{color:#000;outline:3px solid #c6c6c6}
.cells .s-bad{background:#ffc7ce;color:#9c0006}
.cells .s-good{background:#c6efce;color:#006100}
.cells .s-neutral{background:#ffeb9c;color:#9c6500}
.cells .s-calc{background:#f2f2f2;border-color:#7f7f7f;color:#fa7d00;font-weight:700}
.cells .s-check{background:#a5a5a5;border:3px double #3f3f3f;color:#fff;font-weight:700;padding-left:2px}
.cells .s-expl{color:#7f7f7f;font-style:italic}
.cells .s-foll{color:#954f72;text-decoration:underline}
.cells .s-hyper{color:#0563c1;text-decoration:underline}
.cells .s-input{background:#ffcc99;border-color:#7f7f7f;color:#3f3f76}
.spin{width:15px;display:flex;flex-direction:column;border-left:1px solid #ababab}
.spin button{flex:1;border-bottom:1px solid #ababab}
.spin button:last-child{border-bottom:0}
.spin .d{background:#e1e1e1}
.g-cells .tools{padding-left:3px}
.g-edit .tools{padding-left:7px}
.g-edit .stack{width:92px}
.collapse{margin:auto 10px -4px auto;height:16px}

/* message bar and formula bar */
.security{height:29px;background:#fcf7b6;border-bottom:1px solid #d8d48e;display:flex;align-items:center;padding:0 10px}
.security strong{margin:0 10px;font-weight:600;font-size:12px}
.enable{border:1px solid #ababab;background:#fff;height:22px;width:115px;margin-left:21px;font-size:12px}
.dismiss{margin-left:auto}
.fbar{height:46px;display:flex;align-items:center;padding:0 5px;font-size:12px}
.fbar>div{height:26px;background:#fff;border:1px solid #c6c6c6;display:flex;align-items:center}
.namebox{width:102px;padding:0 5px}
.namebox input{flex:1;padding-left:1px}
.dots{width:3px;height:11px;margin:0 13px;background:repeating-linear-gradient(#aaa 0 2px,transparent 2px 4px)}
.fbtns{width:110px;justify-content:space-between;padding:0 12px}
.fx{font:italic bold 15px/16px "Liberation Serif",serif;color:#555}
.fx sub{font-size:11px}
.formula{flex:1;margin-left:3px;padding:0 5px 0 11px}
.formula input{flex:1}

/* recovery pane */
.work{flex:1;display:flex;min-height:0}
.recovery{width:245px;padding:11px 14px 14px;display:flex;flex-direction:column;border-right:1px solid #ababab}
.recovery h2{font-size:20px;line-height:32px;color:#217346}
.recovery p{line-height:13px;margin-top:4px;white-space:nowrap}
.recovery h3{font-weight:700;margin-top:15px;border-bottom:1px solid #ababab;line-height:16px}
.recovery ul{background:#fff;border:1px solid #ababab;border-width:1px 2px 1px 1px;margin:5px 0 0 9px;padding:5px 0 0 11px;flex:1}
.recovery li{display:flex;gap:10px;height:70px;color:#111;line-height:15px;white-space:nowrap}
.recovery li svg{width:16px;height:16px}
.which{display:flex;gap:6px;color:#2e6599;text-decoration:none;margin-top:28px;align-items:center}
.close{border:2px solid #ababab;background:#fff;width:46px;height:23px;align-self:flex-end;margin-top:7px}

/* sheet */
.book{flex:1;min-width:0;display:flex;flex-direction:column}
.view{flex:1;display:flex;min-height:0}
.sheet{flex:1;min-width:0;border-right:1px solid #999;overflow:hidden}
.cells-table{width:100%;table-layout:fixed;border-collapse:separate;border-spacing:0;font:11px/13px "Liberation Sans",Arial,sans-serif;color:#111}
.cells-table th{font-weight:400;padding:0;background:#e6e6e6;border-right:1px solid #ababab;border-bottom:1px solid #999;height:13px;line-height:12px}
.cells-table thead .last{border-right:0}
.cells-table thead .cur{background:#d2d2d2;color:#217346;border-bottom:2px solid #217346}
.cells-table .corner{background:linear-gradient(135deg,#e6e6e6 75%,#b5b5b5 75%)}
.cells-table tbody th{font-size:10px;height:15px;border-right-color:#999;border-bottom-color:#ababab}
.cells-table td{background:#fff;height:15px;padding:0 0 0 2px;border-right:1px solid #d4d4d4;border-bottom:1px solid #d4d4d4;white-space:nowrap}
.cells-table td:last-child{border-right:0;padding-left:1px}
.cells-table .head td{font-weight:700}
.cells-table .low th,.cells-table .low td{height:14px;line-height:12px}
.cells-table .gapped th{border-bottom:3px double #ababab;line-height:11px}
.cells-table .cur-row th{background:#d2d2d2;color:#217346;border-right:2px solid #217346}
.cells-table .long{font-size:10px}
.cells-table .r{text-align:right;padding-right:2px}
.cells-table .r7{text-align:right;padding-right:6px}
.cells-table .err{background:linear-gradient(135deg,#217346 4px,#fff 4px)}
.cells-table .sel-cell{position:relative;outline:2px solid #217346;outline-offset:-1px;z-index:1}
.drop{position:absolute;left:49px;top:0;width:15px;height:15px;background:#f4f6fb;border:1px solid #ababab}
.c-rh{width:27px}.c-g{width:66px}.c-h{width:52px}.c-i{width:99px}.c-j{width:140px}.c-k{width:110px}.c-l{width:84px}.c-m{width:84px}.c-n{width:33px}.c-o{width:78px}.c-p{width:59px}.c-q{width:64px}.c-r{width:127px}.c-s{width:79px}.c-t{width:102px}.c-u{width:83px}.c-v{width:50px}.c-w{width:99px}.c-x{width:37px}
.vscroll{width:21px;padding:2px 3px 0;display:flex;flex-direction:column}
.sb{width:15px;height:15px;background:#fff;border:1px solid #ababab;display:flex;align-items:center;justify-content:center;flex:none}
.sb .car.flip{border-bottom-color:#666}
.vscroll .thumb{flex:1;background:#fff;border:1px solid #ababab}
.gap{height:15px;background:#dadada}
.sheets{height:28px;border-top:1px solid #999;margin-right:20px;display:flex;align-items:center;font-size:12px}
.nav{width:100px;display:flex;gap:24px;padding-left:26px;align-self:stretch;align-items:center;opacity:.5}
.tri{border:4px solid transparent}
.tri.l{border-right:5px solid #666;border-left:0}
.tri.r{border-left:5px solid #666;border-right:0}
.sheets button{height:24px;align-self:flex-start;padding:0 16px}
.sheets .on{background:#fff;color:#217346;font-weight:700;border-bottom:2px solid #217346;width:85px;padding:0;border-right:1px solid #999}
.sheets .add{margin-left:24px}
.sheets .dots{margin:0 14px 0 auto}
.hscroll{flex:0 0 608px;display:flex;background:#dadada}
.hscroll .g1{flex:139}.hscroll .thumb{flex:207;background:#fff;border:1px solid #ababab}.hscroll .g2{flex:232}
.status{height:22px;background:#f1f1f1;border-top:1px solid #c6c6c6;display:flex;align-items:center;padding:0 8px}
.status>svg{margin-left:18px}
.views{margin-left:auto;display:flex;align-self:stretch;margin-right:2px}
.views button{width:38px}
.zm{width:16px;font-size:15px;font-weight:700;color:#555}
.zoom{appearance:none;width:100px;height:12px;background:linear-gradient(#999,#999) 0 5px/100% 1px no-repeat,linear-gradient(#999,#999) 50% 2px/1px 7px no-repeat}
.zoom::-webkit-slider-thumb{appearance:none;width:4px;height:12px;background:#666}
.pct{width:30px;text-align:right}

/* browser */
.browser{flex-direction:column;background:#fff}
.ie{flex:none;font-size:12px}
.ie-ctl{height:27px;display:flex;justify-content:flex-end;gap:33px;padding-right:19px;color:#777}
.ie-ctl svg{width:12px;height:12px}
.ie-nav{height:24px;display:flex;align-items:center;padding-right:8px}
.back{width:38px;height:24px;margin-left:1px}
.fwd{width:26px;margin:0 3px 0 3px}
.url{flex:1279;height:24px;border:1px solid #ababab;display:flex;align-items:center;padding:0 5px 0 4px;gap:5px;color:#777;min-width:0;font-size:11px}
.url b{font-weight:400;color:#111}
.url div{flex:1;white-space:nowrap;margin-left:0}
.pg{width:16px;height:16px}
.find{flex:478;height:24px;border:1px solid #ababab;margin-left:6px;display:flex;align-items:center;padding:0 9px 0 7px;gap:5px;color:#222;min-width:0;font-size:11px}
.find input{flex:1}
.ie-ico{display:flex;gap:8px;margin-left:13px}
.ie-ico svg{width:16px;height:16px;fill:none;stroke:#999}
.ie-tabs{height:26px;padding-top:3px;background:linear-gradient(#fff 4px,#ececec);display:flex}
.ie-tab{width:200px;height:23px;position:relative;background:#fff;border:1px solid #ababab;border-bottom:0;display:flex;align-items:center;padding:0 5px;gap:4px;color:#222;white-space:nowrap;font-size:11px}
.tx{margin-left:auto}
.newtab{width:23px;height:23px;border:1px solid #bbb;border-left:0;background:#e4e4e4}
.app-head{height:51px;display:flex;align-items:center;padding:0 32px 0 16px;font:12px/16px "Liberation Sans",Arial,sans-serif}
.burger{width:30px;height:30px;background:#eb8c00;border-radius:2px;flex-direction:column;gap:2px}
.burger i{width:14px;height:2px;background:#fff}
.logo{margin-left:21px}
.brand{font:italic bold 26px/32px "Liberation Serif",serif;color:#555;margin-left:8px}
.user{margin-left:auto;gap:4px;margin-top:9px}
.bell{position:relative;margin-left:14px}
.badge{position:absolute;right:-4px;top:0;width:16px;height:16px;border-radius:8px;background:#eb8c00;color:#fff;font-weight:700;font-size:10px}
.app{flex:1;display:flex;font:11px/16px "DejaVu Sans",Verdana,sans-serif;color:#333}
.side{width:60px;background:#58585a;display:flex;flex-direction:column;align-items:center;gap:29px;padding-top:16px;flex:none}
.side a{height:32px}
.side svg{width:32px;height:32px}
.content{flex:1;min-width:0}
.tabs{height:40px;background:#f7f7f7;padding:6px 5px 0;display:flex;gap:5px;font:12px/16px "Liberation Sans",Arial,sans-serif}
.tab{width:185px;background:#e3e3e3;border-radius:3px 3px 0 0;display:flex;align-items:center;padding:0 5px 0 9px;color:#999}
.tab.on{background:#fff;color:#555}
.tab.on span{font-weight:700}
.tab span{margin-left:7px;flex:1}
.cx{width:10px;height:10px;margin:0 0 12px 5px;color:#777}
.two{display:grid;grid-template-columns:1fr 1fr;gap:20px;padding:16px 10px 0;min-height:269px}
.two h2{font-weight:700;font-size:13px;line-height:20px;border-bottom:1px solid #999;height:26px;display:flex;align-items:center;padding-bottom:6px;gap:4px}
.links li{height:21px;line-height:18px;padding-left:19px;position:relative}
.links li:nth-child(3n){height:20px}
.links li::before{content:"";position:absolute;left:3px;top:4px;width:9px;height:9px;border-radius:50%;background:radial-gradient(circle at 35% 40%,#e0706c,#a01818 60%,#701010)}
.links a{color:#111}
.links .dis{color:#888}
.bills{margin:0 23px 0 5px}
.bills h2{background:#602320;color:#fff;font-weight:700;font-size:11px;height:25px;display:flex;align-items:center;justify-content:space-between;padding:0 12px 0 5px}
.bwrap{display:flex;background:#f0f0f0}
.bwrap table{flex:1;width:100%;table-layout:fixed;border-collapse:separate;border-spacing:0}
.bwrap th{font-weight:400;text-align:left;height:25px;padding:0 6px;background:#e8e6d8;border-top:2px solid #dbd8c6;border-bottom:2px solid #c5bfae;border-right:2px solid #c8c3b0}
.bwrap td{height:25px;padding:2px 5px 0;background:#fcfcfc;border-bottom:1px solid #dfd8c6;white-space:nowrap}
.bwrap .mid{text-align:center}
.bwrap th.mid{padding-right:22px}
.bwrap .amt{text-align:right}
.bwrap th.amt{padding-right:20px}
.bscroll{width:17px;border-top:25px solid #e8e6d8;display:flex;flex-direction:column;align-items:center;padding:16px 0 17px}
.bscroll span{width:15px;height:21px;background:#cdcdcd;margin-top:8px}
.bscroll .dn{margin-top:auto}
.two.help{gap:0;padding-top:28px;min-height:0}
.two.help h2{height:20px;padding-bottom:0}
.two.help section+section h2{padding-left:25px}
.two.help section+section ul{padding-left:25px}
```
FILE: sheet.js
```js
// Rows of the ForBilling sheet: first name, fee, VAT on fee, total, VAT type, bill number
const bills = [
  ["Mabel", "160,000.00", "19,200.00", "179,200.00", "VAT", "82617"],
  ["Patrick", "10,850.00", "1,302.00", "12,152.00", "ZR", "82618"],
  ["Jerome", "497,000.00", "59,640.00", "556,640.00", "VAT", "82619"],
  ["Jerome", "1,190,910.00", "142,909.20", "1,333,819.20", "ZR", "82620"],
  ["Mabel", "455,000.00", "54,600.00", "509,600.00", "VAT", "82621"],
  ["Esteban", "43,400.00", "5,208.00", "48,608.00", "VAT", "82622"],
  ["Esteban", "45,000.00", "5,400.00", "50,400.00", "VAT", "82623"],
  ["Esteban", "42,000.00", "5,040.00", "47,040.00", "VAT", "82624"],
  ["Luz", "454,600.00", "54,552.00", "509,152.00", "VAT", "82625"],
  ["Jennifer", "935,000.00", "112,200.00", "1,047,200.00", "VAT", "82626"],
  ["Teresita", "26,250.00", "3,150.00", "29,400.00", "VAT", "82612"]
];
const titles = ["WBS code", "Country", "Receiving entity", "Receiving territory LOS", "Currency", "Addresse F/N", "Addresse L/N", "OPE", "OPE Amount", "OPE VAT", "Total OPE", "OPE Description", "Fee Amount", "Fee Amount VAT", "Total Amount", "VAT/ZR", "Partner", "Bill #", "Bill description"];
const cell = (text, cls) => `<td${cls ? ` class="${cls}"` : ""}>${text}</td>`;
const out = [];
for (let n = 1; n <= 52; n++) {
  if (n === 49) continue; // hidden row
  let cells, rowClass = "";
  if (n === 1) {
    cells = titles.map(t => cell(t)).join("");
    rowClass = "head";
  } else if (n <= 12) {
    const [name, fee, vat, total, type, no] = bills[n - 2];
    const picked = n === 8;
    cells = cell("N/A").repeat(4) + cell("PHP - Philippine Peso", "long") + cell(name) + cell("") + cell("Yes") + cell("") +
      cell("0.00", "r") + cell("0.00", "r") + cell("Out-of-pocket expenses s") + cell(fee, "r7") + cell(vat, "r") + cell(total, "r") +
      (picked ? cell(type + '<button class="drop" aria-label="Choose value"><i class="car"></i></button>', "sel-cell") : cell(type)) +
      cell("Imelda Ronnie Castr", "long") + cell(no, "r") + cell("Professional services re");
    if (picked) rowClass = "cur-row";
  } else {
    cells = titles.map((t, i) => cell("", i === 8 && n >= 45 && n <= 48 ? "err" : "")).join("");
    if (n === 48) rowClass = "gapped";
    if (n > 48) rowClass = "low";
  }
  out.push(`<tr class="${rowClass}"><th>${n}</th>${cells}</tr>`);
}
document.getElementById("rows").innerHTML = out.join("");
```
